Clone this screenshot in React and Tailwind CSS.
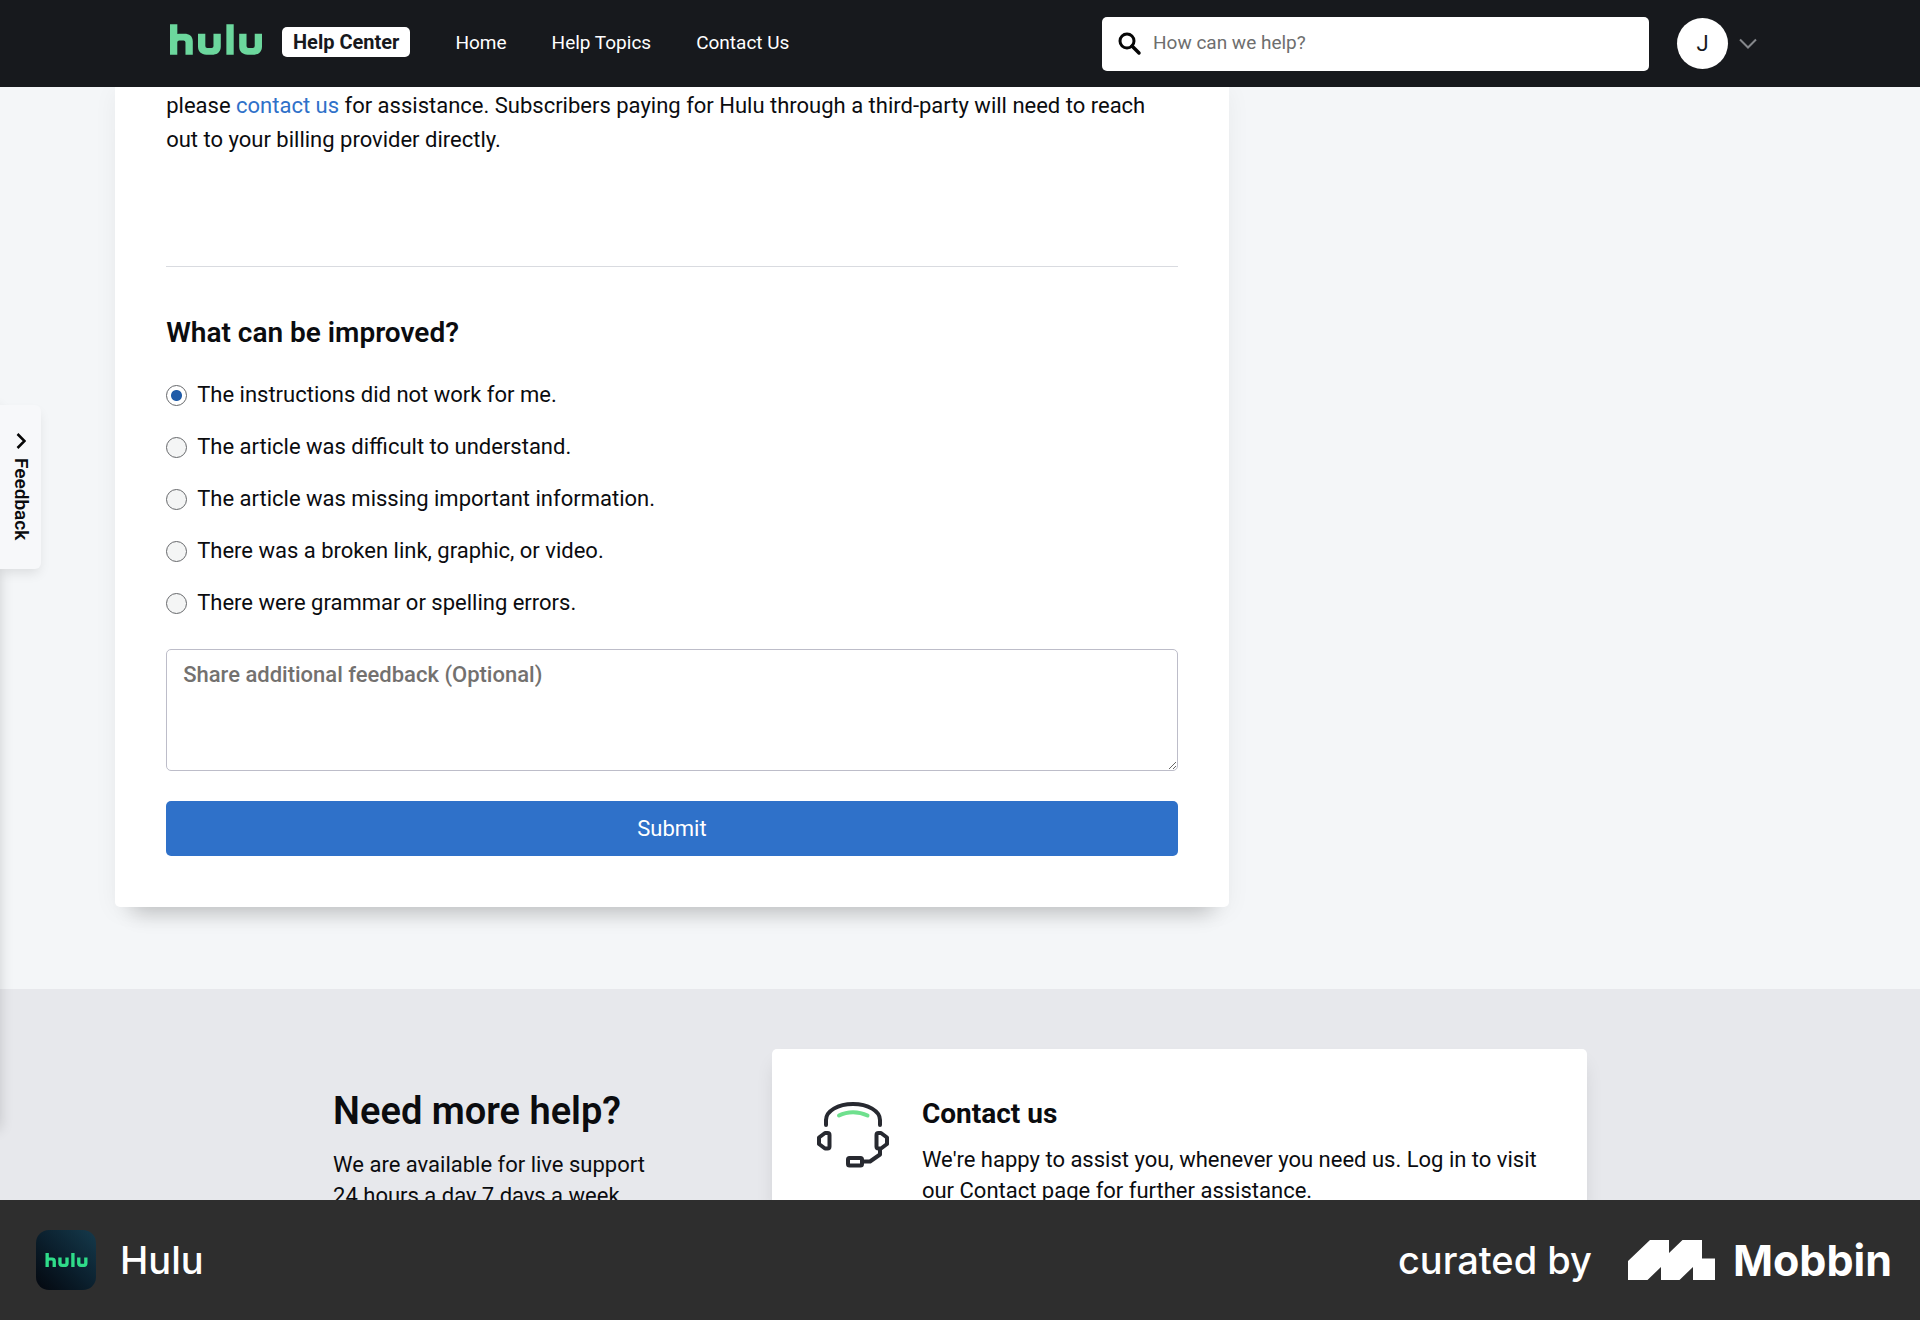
import React from "react";

const HULU_PATH =
  "M14.707 15.957h1.912V8.043h-1.912zm-3.357-2.256a.517.517 0 01-.512.511H9.727a.517.517 0 01-.512-.511v-3.19H7.303v3.345c0 1.368.879 2.09 2.168 2.09h1.868c1.189 0 1.912-.856 1.912-2.09V10.51h-1.912c.01 0 .01 3.09.01 3.19zm10.75-3.19v3.19a.517.517 0 01-.512.511h-1.112a.517.517 0 01-.511-.511v-3.19h-1.912v3.345c0 1.368.878 2.09 2.167 2.09h1.868c1.19 0 1.912-.856 1.912-2.09V10.51zm-18.32 0H2.557c-.434 0-.645.11-.645.11V8.044H0v7.903h1.9v-3.179c0-.278.234-.511.512-.511h1.112c.278 0 .511.233.511.511v3.19h1.912v-3.446c0-1.445-.967-2-2.167-2z";

function HuluLogo({ className }) {
  return (
    <svg viewBox="0 8 24 8" role="img" aria-label="Hulu" className={className} fill="currentColor">
      <path d={HULU_PATH} />
    </svg>
  );
}

function Headset() {
  return (
    <svg
      viewBox="0 0 72 66"
      className="mt-1 h-[66px] w-[72px] shrink-0"
      fill="none"
      stroke="#272930"
      strokeWidth="4"
      strokeLinecap="round"
      strokeLinejoin="round"
      aria-hidden="true"
    >
      <path d="M9 23v-5C9 9 21 2 36 2s27 7 27 16v5" />
      <path d="M22 13.500c8.500-4.500 19.500-4.500 28.500 0" stroke="#6fe08e" />
      <path d="M8 31h2.500a2 2 0 0 1 2 2v11.500a2 2 0 0 1-2 2H8L2 42v-6.500z" />
      <path d="M64 31h-2.500a2 2 0 0 0-2 2v11.500a2 2 0 0 0 2 2H64l6-4.500v-6.500z" />
      <path d="M63 47v5.500L53 59.500h-7" />
      <rect x="31" y="56" width="14" height="7.500" rx="1.500" />
    </svg>
  );
}

function Header() {
  return (
    <header className="relative z-20 flex h-[87px] shrink-0 items-center bg-[#17191d] pr-[163px] pl-[170px] text-[19px] text-white">
      <a href="#home" className="flex items-end gap-5 pb-1.5">
        <HuluLogo className="mb-0.5 h-[31px] w-[92px] text-[#6cd79d]" />
        <span className="flex h-[30px] items-center rounded-[5px] bg-white px-[11px] text-[20px] font-bold text-[#17191d]">
          Help Center
        </span>
      </a>
      <nav className="ml-[45px] flex items-center gap-[45px]">
        <a href="#home">Home</a>
        <a href="#topics">Help Topics</a>
        <a href="#contact">Contact Us</a>
      </nav>
      <label className="ml-auto flex h-[54px] w-[547px] items-center gap-[11px] rounded-[5px] bg-white px-4">
        <svg viewBox="0 0 24 24" className="size-6 shrink-0" fill="none" stroke="#060606" aria-hidden="true">
          <circle cx="9" cy="9" r="7" strokeWidth="3" />
          <path d="M14 14l7 7" strokeWidth="3.500" strokeLinecap="round" />
        </svg>
        <input
          type="search"
          aria-label="Search help"
          placeholder="How can we help?"
          className="min-w-0 flex-1 bg-transparent text-[19px] text-black outline-none placeholder:text-[#6e6e6e]"
        />
      </label>
      <button type="button" aria-label="Account menu" className="ml-7 flex items-center gap-[11px]">
        <span className="flex size-[51px] items-center justify-center rounded-full bg-white text-[22px] text-[#17191d]">J</span>
        <svg viewBox="0 0 18 12" className="h-3 w-[18px]" fill="none" stroke="#85878b" strokeWidth="2" aria-hidden="true">
          <path d="M1 1.500l8 8 8-8" />
        </svg>
      </button>
    </header>
  );
}

const REASONS = [
  "The instructions did not work for me.",
  "The article was difficult to understand.",
  "The article was missing important information.",
  "There was a broken link, graphic, or video.",
  "There were grammar or spelling errors.",
];

function ArticleCard() {
  return (
    <article className="ml-[6%] w-[58%] shrink-0 rounded-b-[5px] bg-white px-[51px] pt-[2px] pb-[51px] shadow-[0_24px_20px_-18px_rgba(0,0,0,0.2),0_4px_24px_rgba(0,0,0,0.05)]">
      <p className="leading-[34px]">
        please <a href="#contact" className="text-[#2f71c9]">contact us</a> for assistance. Subscribers paying for Hulu
        through a third-party will need to reach out to your billing provider directly.
      </p>
      <hr className="mt-[109px] border-[#d9dbe0]" />
      <form onSubmit={(e) => e.preventDefault()}>
        <fieldset>
          <legend className="pt-[49px] text-[28px] leading-[34px] font-semibold">What can be improved?</legend>
          <div className="mt-[29px] flex flex-col gap-5">
            {REASONS.map((reason, i) => (
              <label key={reason} className="flex items-center gap-[10px] leading-8">
                <input
                  type="radio"
                  name="reason"
                  defaultChecked={i === 0}
                  className="size-[21px] shrink-0 appearance-none rounded-full border border-[#66686b] bg-[#f4f5f5] checked:bg-[radial-gradient(circle,#1f5ba8_5px,#ffffff_6px)]"
                />
                {reason}
              </label>
            ))}
          </div>
        </fieldset>
        <textarea
          aria-label="Share additional feedback"
          placeholder="Share additional feedback (Optional)"
          className="mt-[30px] block h-[122px] w-full resize rounded-[5px] border border-[#bdbdc9] bg-white px-4 py-[11px] leading-7 font-medium outline-none placeholder:text-[#73716f]"
        />
        <button type="submit" className="mt-[30px] block h-[55px] w-full rounded-[5px] bg-[#2f71c9] text-white">
          Submit
        </button>
      </form>
    </article>
  );
}

function MoreHelp() {
  return (
    <section className="mt-[82px] flex flex-1 justify-between bg-[#e7e8ec] px-[17.35%] pt-[60px]">
      <div className="w-[27%] pt-10">
        <h2 className="text-[38px] leading-[44px] font-semibold whitespace-nowrap">Need more help?</h2>
        <p className="mt-4 leading-[31px]">We are available for live support 24 hours a day 7 days a week.</p>
      </div>
      <div className="flex w-[65%] gap-[33px] rounded-t-[5px] bg-white pt-[49px] pr-6 pl-[45px] shadow-[0_12px_20px_-4px_rgba(0,0,0,0.12)]">
        <Headset />
        <div>
          <h3 className="text-[28px] leading-8 font-bold">Contact us</h3>
          <p className="mt-[14px] leading-[31px]">
            We're happy to assist you, whenever you need us. Log in to visit our Contact page for further assistance.
          </p>
        </div>
      </div>
    </section>
  );
}

function FeedbackTab() {
  return (
    <>
      <div className="absolute top-[405px] -left-10 h-[720px] w-10 shadow-[0_4px_14px_rgba(0,0,0,0.16)]" />
      <button
        type="button"
        className="absolute top-[405px] left-0 flex h-[164px] w-[41px] flex-col items-center rounded-r-[6px] bg-[#f7f8fa] pt-7 text-[19px] font-semibold shadow-[0_6px_12px_-2px_rgba(0,0,0,0.1)]"
      >
        <svg viewBox="0 0 10 16" className="h-4 w-[10px]" fill="none" stroke="#060606" strokeWidth="2.500" aria-hidden="true">
          <path d="M1.500 1L8.500 8l-7 7" />
        </svg>
        <span className="mt-[9px] leading-5 [writing-mode:vertical-rl]">Feedback</span>
      </button>
    </>
  );
}

function CreditBar() {
  return (
    <footer className="relative z-20 flex h-[120px] shrink-0 items-center justify-between bg-[#2e2e2e] pr-7 pl-9 font-['Inter',sans-serif] text-[38px] font-medium text-white">
      <div className="flex items-center gap-6">
        <span className="flex size-[60px] items-center justify-center rounded-[13px] bg-linear-to-tr from-[#04080f] via-[#0b202e] to-[#153a4c]">
          <HuluLogo className="h-[14px] w-[43px] text-[#2fdc89]" />
        </span>
        <span>Hulu</span>
      </div>
      <div className="flex items-center">
        <span>curated by</span>
        <svg viewBox="0 0 87 40" className="ml-9 h-10 w-[87px]" fill="currentColor" aria-hidden="true">
          <polygon points="0,21 22,0 41,0 41,13 54.500,0 74,0 74,18.500 87,18.500 87,40 65,40 65,27 51.500,40 33,40 33,27 19.500,40 0,40" />
        </svg>
        <span className="ml-[18px] text-[43px] font-bold">Mobbin</span>
      </div>
    </footer>
  );
}

export default function App() {
  return (
    <div className="relative flex h-screen flex-col overflow-hidden bg-[#f4f6f8] font-['Roboto','Inter',sans-serif] text-[22px] text-[#0b0c0f]">
      <Header />
      <main className="flex min-h-0 flex-1 flex-col overflow-hidden">
        <ArticleCard />
        <MoreHelp />
      </main>
      <FeedbackTab />
      <CreditBar />
    </div>
  );
}
